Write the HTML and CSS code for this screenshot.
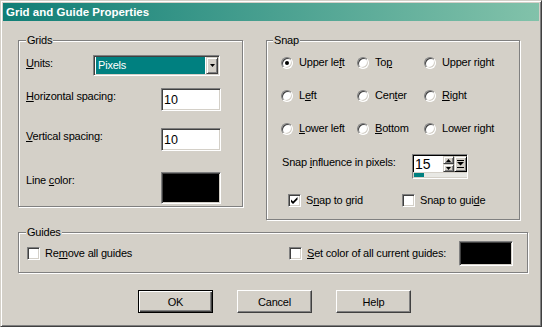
FILE: index.html
```html
<!DOCTYPE html>
<html lang="en">
<head>
  <meta charset="UTF-8" />
  <title>Grid and Guide Properties</title>
  <link rel="stylesheet" href="styles.css">
</head>
<body>
  <div class="window">
    <div class="titlebar">Grid and Guide Properties</div>

    <div class="content">
      <div class="top">
        <fieldset class="group grids">
          <legend>Grids</legend>
          <div class="grid-rows">
            <div class="row">
              <span class="label"><u>U</u>nits:</span>
              <div class="select sunken">
                <span class="select-value">Pixels</span>
                <span class="select-btn raised">
                  <svg width="5" height="3" viewBox="0 0 5 3"><path d="M0 0h5L2.5 3z"/></svg>
                </span>
              </div>
            </div>
            <div class="row">
              <span class="label"><u>H</u>orizontal spacing:</span>
              <input class="field sunken" type="text" value="10">
            </div>
            <div class="row">
              <span class="label"><u>V</u>ertical spacing:</span>
              <input class="field sunken" type="text" value="10">
            </div>
            <div class="row">
              <span class="label">Line <u>c</u>olor:</span>
              <span class="swatch sunken"></span>
            </div>
          </div>
        </fieldset>

        <fieldset class="group snap">
          <legend>Snap</legend>
          <div class="radios">
            <label class="opt"><span class="radio on"></span><span>Upper le<u>f</u>t</span></label>
            <label class="opt"><span class="radio"></span><span>To<u>p</u></span></label>
            <label class="opt"><span class="radio"></span><span>Upper right</span></label>
            <label class="opt"><span class="radio"></span><span>L<u>e</u>ft</span></label>
            <label class="opt"><span class="radio"></span><span>Cen<u>t</u>er</span></label>
            <label class="opt"><span class="radio"></span><span><u>R</u>ight</span></label>
            <label class="opt"><span class="radio"></span><span><u>L</u>ower left</span></label>
            <label class="opt"><span class="radio"></span><span><u>B</u>ottom</span></label>
            <label class="opt"><span class="radio"></span><span>Lower right</span></label>
          </div>

          <div class="influence">
            <span class="label">Snap <u>i</u>nfluence in pixels:</span>
            <div class="spin">
              <div class="spin-top">
                <span class="spin-field">15</span>
                <span class="spin-arrows">
                  <span class="raised"><svg width="5" height="3" viewBox="0 0 5 3"><path d="M2.5 0L5 3H0z"/></svg></span>
                  <span class="raised"><svg width="5" height="3" viewBox="0 0 5 3"><path d="M0 0h5L2.5 3z"/></svg></span>
                </span>
                <span class="spin-drop raised">
                  <svg width="7" height="8" viewBox="0 0 7 8"><path d="M0 0h7v1H0zM0 2h7L3.5 5.5zM0 7h7v1H0z"/></svg>
                </span>
              </div>
              <div class="spin-bar"><span class="spin-fill"></span></div>
            </div>
          </div>

          <div class="checks">
            <label class="opt">
              <span class="check sunken">
                <svg width="7" height="7" viewBox="0 0 7 7"><path d="M0 2.5l2 2L6.5 0v2.5L2 7 0 5z"/></svg>
              </span>
              <span>S<u>n</u>ap to grid</span>
            </label>
            <label class="opt"><span class="check sunken"></span><span>Snap to gui<u>d</u>e</span></label>
          </div>
        </fieldset>
      </div>

      <fieldset class="group guides">
        <legend>Guides</legend>
        <div class="guide-row">
          <label class="opt"><span class="check sunken"></span><span>Re<u>m</u>ove all guides</span></label>
          <label class="opt"><span class="check sunken"></span><span><u>S</u>et color of all current guides:</span></label>
          <span class="swatch guide-swatch sunken"></span>
        </div>
      </fieldset>

      <div class="buttons">
        <button class="btn default">OK</button>
        <button class="btn">Cancel</button>
        <button class="btn">Help</button>
      </div>
    </div>
  </div>
</body>
</html>
```

FILE: styles.css
```css
* {
  box-sizing: border-box;
}

body {
  margin: 0;
  font-family: "Liberation Sans", Arial, sans-serif;
  font-size: 11px;
  line-height: 13px;
  letter-spacing: -0.2px;
  color: #000;
  background: #d4d0c8;
}

/* classic 3d edges */
.sunken {
  border: 1px solid;
  border-color: #808080 #fff #fff #808080;
  box-shadow: inset 1px 1px #404040, inset -1px -1px #d4d0c8;
}

.raised {
  background: #d4d0c8;
  border: 1px solid;
  border-color: #d4d0c8 #404040 #404040 #d4d0c8;
  box-shadow: inset 1px 1px #fff, inset -1px -1px #808080;
  display: flex;
  align-items: center;
  justify-content: center;
}

.window {
  width: 542px;
  height: 327px;
  padding: 2px;
  background: #d4d0c8;
  border: 1px solid;
  border-color: #d4d0c8 #404040 #404040 #d4d0c8;
  box-shadow: inset 1px 1px #fff, inset -1px -1px #808080;
}

.titlebar {
  height: 18px;
  line-height: 18px;
  padding-left: 3px;
  color: #fff;
  font-weight: bold;
  font-size: 11.5px;
  letter-spacing: 0;
  background: linear-gradient(to right, #107e76, #82c2aa);
}

.content {
  padding: 13px 0 0 15px;
}

.top {
  display: flex;
  align-items: flex-start;
  gap: 23px;
}

.group {
  margin: 0;
  padding: 0;
  min-width: 0;
  flex: none;
  border: 1px solid #808080;
  box-shadow: inset 1px 1px #fff, 1px 1px #fff;
}

.group legend {
  padding: 0 1px;
  line-height: 13px;
  background: #d4d0c8;
}

.grids {
  width: 225px;
  padding: 8px 21px 2px 7px;
}

.snap {
  width: 254px;
  padding: 9px 0 12px 14px;
}

.snap legend {
  margin-left: -8px;
}

.guides {
  width: 510px;
  margin-top: 6px;
  padding: 2px 14px 6px 7px;
}

/* grids */
.grid-rows {
  display: grid;
  grid-template-rows: 33px 40px 44px 32px;
}

.row {
  display: flex;
  justify-content: space-between;
  align-items: flex-start;
}

.label {
  padding-top: 2px;
}

.select {
  width: 127px;
  height: 21px;
  margin-right: 1px;
  padding: 1px;
  display: flex;
  background: #fff;
}

.select-value {
  flex: 1;
  margin: 0 1px;
  padding-left: 2px;
  line-height: 17px;
  color: #fff;
  background: #008080;
}

.select-btn {
  width: 12px;
}

.field {
  width: 60px;
  height: 23px;
  margin: 0;
  padding: 0 2px;
  font-family: inherit;
  font-size: 12.5px;
  letter-spacing: 0;
  background: #fff;
  outline: none;
}

.swatch {
  display: block;
  width: 60px;
  height: 32px;
  background: #000;
}

/* snap */
.radios {
  display: grid;
  grid-template-columns: 76px 67px auto;
  row-gap: 20px;
}

.opt {
  display: flex;
  align-items: center;
  gap: 6px;
  height: 13px;
  white-space: nowrap;
}

.radio {
  position: relative;
  flex: none;
  width: 12px;
  height: 12px;
  border-radius: 50%;
  background: #fff;
  border: 1px solid;
  border-color: #808080 #fff #fff #808080;
  box-shadow: inset 1px 1px #404040, inset -1px -1px #d4d0c8;
}

.radio.on::after {
  content: "";
  position: absolute;
  left: 3px;
  top: 3px;
  width: 4px;
  height: 4px;
  border-radius: 50%;
  background: #000;
}

.check {
  flex: none;
  width: 13px;
  height: 13px;
  display: flex;
  align-items: center;
  justify-content: center;
  background: #fff;
}

.influence {
  display: grid;
  grid-template-columns: 131px auto;
  align-items: start;
  margin-top: 19px;
}

.influence .label {
  padding: 2px 0 0 1px;
}

.spin {
  width: 56px;
  height: 25px;
  display: flex;
  flex-direction: column;
  border: 1px solid;
  border-color: #808080 #fff #fff #808080;
}

.spin-top {
  display: flex;
  height: 17px;
  border-top: 1px solid #000;
  border-left: 1px solid #000;
}

.spin-field {
  width: 29px;
  padding-left: 1px;
  font-size: 14px;
  line-height: 16px;
  letter-spacing: 0;
  background: #fff;
}

.spin-arrows {
  width: 11px;
  display: flex;
  flex-direction: column;
}

.spin-arrows span {
  flex: 1;
}

.spin-drop {
  width: 13px;
  border-right-color: #000;
  border-bottom-color: #000;
}

.spin-bar {
  height: 6px;
  padding: 1px 0 1px 1px;
  display: flex;
}

.spin-bar::after {
  content: "";
  flex: 1;
  background: #e8e8e4;
}

.spin-fill {
  width: 10px;
  background: #008080;
}

.checks {
  display: grid;
  grid-template-columns: 114px auto;
  margin: 15px 0 0 7px;
}

.checks .opt {
  gap: 5px;
}

/* guides */
.guide-row {
  display: grid;
  grid-template-columns: 262px 1fr auto;
  align-items: center;
  padding-left: 1px;
}

.guide-row .opt {
  gap: 5px;
}

.guide-swatch {
  width: 54px;
  height: 25px;
}

/* buttons */
.buttons {
  display: flex;
  gap: 24px;
  margin-top: 17px;
  padding-left: 120px;
}

.btn {
  width: 75px;
  height: 23px;
  padding: 0;
  font-family: inherit;
  font-size: 11px;
  letter-spacing: -0.2px;
  color: #000;
  background: #d4d0c8;
  border: 1px solid;
  border-color: #fff #404040 #404040 #fff;
  box-shadow: inset -1px -1px #808080;
}

.btn.default {
  border-color: #000;
  box-shadow: inset 1px 1px #fff, inset -1px -1px #404040, inset -2px -2px #808080;
}
```
